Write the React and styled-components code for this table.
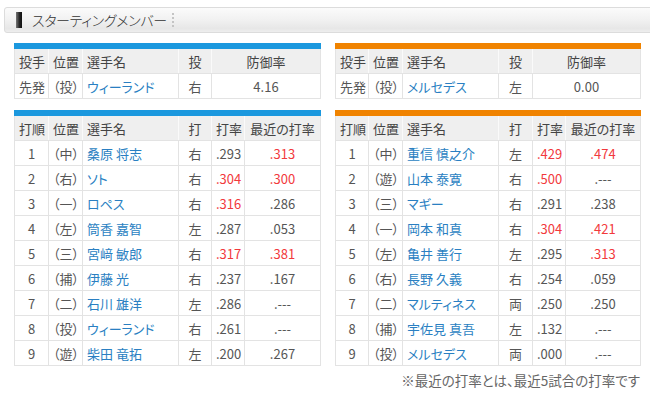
import styled, { createGlobalStyle } from 'styled-components';

const GlobalStyle = createGlobalStyle`
  body {
    margin: 0;
    background: #fff;
    font-family: "Noto Sans CJK JP", "Liberation Sans", sans-serif;
    color: #444;
  }
`;

const colors = { blue: '#1b98de', orange: '#f08300' };

const Page = styled.div`
  width: 650px;
  height: 393px;
  overflow: hidden;
  padding-top: 7px;
  box-sizing: border-box;
`;

const TitleBar = styled.div`
  margin-left: 4px;
  width: 660px;
  height: 26px;
  box-sizing: border-box;
  border: 1px solid #dcdcdc;
  border-radius: 3px;
  background: linear-gradient(#fbfbfb 0%, #f1f1f1 50%, #e7e7e7 85%, #eeeeee 100%);
  display: flex;
  align-items: center;
  padding-left: 11px;
`;

const TitleMark = styled.span`
  width: 6px;
  height: 16px;
  background: linear-gradient(90deg, #777 0%, #222 60%, #111 100%);
  margin-right: 10px;
`;

const TitleText = styled.h2`
  margin: 0;
  font-size: 14px;
  font-weight: 300;
  color: #333;
  font-feature-settings: "palt";
  letter-spacing: -0.3px;
`;

const TitleDots = styled.span`
  width: 0;
  height: 14px;
  border-left: 2px dotted #c4c4c4;
  margin-left: 5px;
`;

const Columns = styled.div`
  display: flex;
  gap: 15px;
  padding-left: 14px;
  margin-top: 10px;
`;

const Side = styled.div`
  display: flex;
  flex-direction: column;
  gap: 11px;
  width: ${({ $w }) => $w}px;
`;

const Table = styled.table`
  width: 100%;
  table-layout: fixed;
  border-collapse: collapse;
  border-top: 6px solid ${({ $color }) => $color};
  font-size: 13px;
  font-feature-settings: "palt";
`;

const Th = styled.th`
  height: 24px;
  padding: 0 4px;
  background: #efefef;
  font-weight: normal;
  color: #444;
  text-align: ${({ $align }) => $align || 'center'};
  border: 1px solid #e3e3e3;
  border-left-color: #fafafa;
  border-right-color: #fafafa;
  border-top: none;
  &:first-child { border-left-color: #e3e3e3; }
  &:last-child { border-right-color: #e3e3e3; }
  white-space: nowrap;
`;

const Td = styled.td`
  height: 24px;
  padding: 0 4px;
  border: 1px solid #e3e3e3;
  text-align: ${({ $align }) => $align || 'center'};
  color: ${({ $hot }) => ($hot ? '#f2393c' : '#555')};
  white-space: nowrap;
`;

const PlayerLink = styled.a`
  color: #2a7fc2;
  text-decoration: none;
`;

const Note = styled.p`
  margin: 4px 10px 0 0;
  text-align: right;
  font-size: 13.5px;
  color: #666;
  font-feature-settings: "palt";
`;

const sides = [
  {
    color: colors.blue,
    width: 306,
    pcols: [34, 34, 96, 33, 109],
    bcols: [34, 34, 96, 33, 33, 76],
    pitcher: { name: 'ウィーランド', hand: '右', era: '4.16' },
    batters: [
      ['中', '桑原 将志', '右', '.293', '.313'],
      ['右', 'ソト', '右', '.304', '.300'],
      ['一', 'ロペス', '右', '.316', '.286'],
      ['左', '筒香 嘉智', '左', '.287', '.053'],
      ['三', '宮﨑 敏郎', '右', '.317', '.381'],
      ['捕', '伊藤 光', '右', '.237', '.167'],
      ['二', '石川 雄洋', '左', '.286', '.---'],
      ['投', 'ウィーランド', '右', '.261', '.---'],
      ['遊', '柴田 竜拓', '左', '.200', '.267'],
    ],
  },
  {
    color: colors.orange,
    width: 305,
    pcols: [33, 34, 96, 34, 108],
    bcols: [33, 34, 96, 34, 33, 75],
    pitcher: { name: 'メルセデス', hand: '左', era: '0.00' },
    batters: [
      ['中', '重信 慎之介', '左', '.429', '.474'],
      ['遊', '山本 泰寛', '右', '.500', '.---'],
      ['三', 'マギー', '右', '.291', '.238'],
      ['一', '岡本 和真', '右', '.304', '.421'],
      ['左', '亀井 善行', '左', '.295', '.313'],
      ['右', '長野 久義', '右', '.254', '.059'],
      ['二', 'マルティネス', '両', '.250', '.250'],
      ['捕', '宇佐見 真吾', '左', '.132', '.---'],
      ['投', 'メルセデス', '両', '.000', '.---'],
    ],
  },
];

const isHot = (avg) => avg !== '.---' && parseFloat(avg) >= 0.3;

const Cols = ({ widths }) => (
  <colgroup>
    {widths.map((w, i) => <col key={i} style={{ width: w }} />)}
  </colgroup>
);

const TeamSide = ({ team }) => (
  <Side $w={team.width}>
    <Table $color={team.color}>
      <Cols widths={team.pcols} />
      <thead>
        <tr>
          <Th>投手</Th>
          <Th>位置</Th>
          <Th $align="left">選手名</Th>
          <Th>投</Th>
          <Th>防御率</Th>
        </tr>
      </thead>
      <tbody>
        <tr>
          <Td>先発</Td>
          <Td>（投）</Td>
          <Td $align="left"><PlayerLink href="#">{team.pitcher.name}</PlayerLink></Td>
          <Td>{team.pitcher.hand}</Td>
          <Td>{team.pitcher.era}</Td>
        </tr>
      </tbody>
    </Table>
    <Table $color={team.color}>
      <Cols widths={team.bcols} />
      <thead>
        <tr>
          <Th>打順</Th>
          <Th>位置</Th>
          <Th $align="left">選手名</Th>
          <Th>打</Th>
          <Th>打率</Th>
          <Th>最近の打率</Th>
        </tr>
      </thead>
      <tbody>
        {team.batters.map(([pos, name, hand, avg, recent], i) => (
          <tr key={name}>
            <Td>{i + 1}</Td>
            <Td>（{pos}）</Td>
            <Td $align="left"><PlayerLink href="#">{name}</PlayerLink></Td>
            <Td>{hand}</Td>
            <Td $hot={isHot(avg)}>{avg}</Td>
            <Td $hot={isHot(recent)}>{recent}</Td>
          </tr>
        ))}
      </tbody>
    </Table>
  </Side>
);

export default function App() {
  return (
    <Page>
      <GlobalStyle />
      <TitleBar>
        <TitleMark />
        <TitleText>スターティングメンバー</TitleText>
        <TitleDots />
      </TitleBar>
      <Columns>
        {sides.map((team) => <TeamSide key={team.color} team={team} />)}
      </Columns>
      <Note>※最近の打率とは、最近5試合の打率です</Note>
    </Page>
  );
}
